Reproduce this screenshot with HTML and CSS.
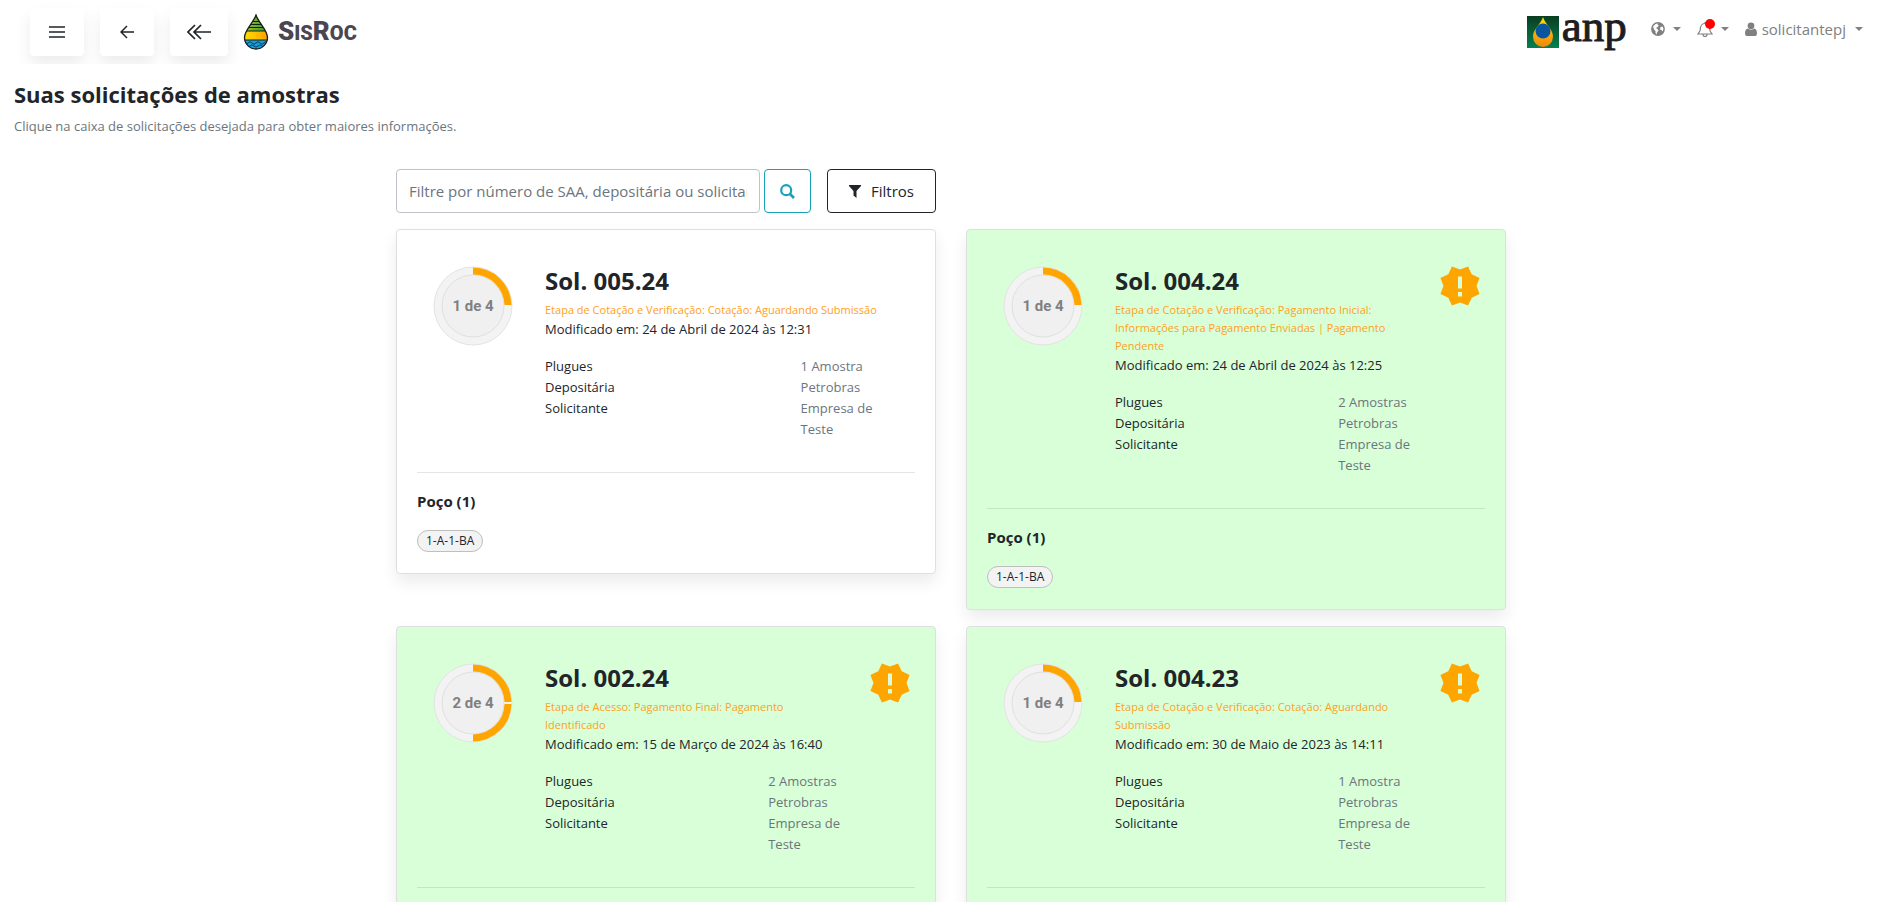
FILE: index.html
```html
<!DOCTYPE html>
<html lang="pt-BR">
<head>
<meta charset="utf-8">
<title>SisRoc - Solicitações de amostras</title>
<link rel="stylesheet" href="styles.css">
</head>
<body>
<svg class="defs" aria-hidden="true">
  <symbol id="badge" viewBox="-20 -20 40 40">
    <path fill="#ffa500" d="M0-16.5 8.1-19.6 11.7-11.7 19.6-8.1 16.5 0 19.6 8.1 11.7 11.7 8.1 19.6 0 16.5-8.1 19.6-11.7 11.7-19.6 8.1-16.5 0-19.6-8.1-11.7-11.7-8.1-19.6z"/>
    <path fill="#d8ffd8" d="M-2-9.5h4v12h-4zM-2 6h4v4.500h-4z"/>
  </symbol>
  <symbol id="ring" viewBox="0 0 80 80">
    <circle cx="40" cy="40" r="39" fill="#f3f3f3" stroke="#e3e3e3"/>
    <circle cx="40" cy="40" r="31" fill="#f0f0f0" stroke="#e0e0e0"/>
    <path d="M40 5A35 35 0 0 1 75 39" fill="none" stroke="#ffa500" stroke-width="7"/>
  </symbol>
</svg>
<header class="topbar">
  <button class="nav-btn" aria-label="Menu">
    <svg width="16" height="12" viewBox="0 0 16 12"><path d="M0 1h16M0 6h16M0 11h16" stroke="#212529" stroke-width="1.500"/></svg>
  </button>
  <button class="nav-btn" aria-label="Voltar">
    <svg width="14" height="14" viewBox="0 0 14 14"><path d="M14 7H1M7 1 1 7l6 6" fill="none" stroke="#212529" stroke-width="1.500"/></svg>
  </button>
  <button class="nav-btn nav-btn-wide" aria-label="Voltar ao início">
    <svg width="24" height="16" viewBox="0 0 24 16"><path d="M24 8H8M8 1 1 8l7 7M14 1 7 8l7 7" fill="none" stroke="#212529" stroke-width="1.700"/></svg>
  </button>
  <a class="brand" href="#">
    <svg width="26" height="36" viewBox="0 0 26 36">
      <defs>
        <linearGradient id="g1" x2="1"><stop stop-color="#a5c71f"/><stop offset="1" stop-color="#2f8f3c"/></linearGradient>
        <linearGradient id="g2" x2="1"><stop stop-color="#ffe000"/><stop offset="1" stop-color="#ff9d00"/></linearGradient>
        <clipPath id="drop"><path d="M13 1C11 8 1.500 16 1.500 23.500a11.500 11.500 0 0 0 23 0C24.500 16 15 8 13 1z"/></clipPath>
      </defs>
      <g clip-path="url(#drop)">
        <path fill="url(#g1)" d="M0 0h26v17H0z"/>
        <path fill="url(#g2)" d="M0 17h26v9H0z"/>
        <path fill="#159fd8" d="M0 26h26v10H0z"/>
        <path d="M0 7.500h26M0 10.500h26M0 13.500h26M0 17h26M0 26h26" stroke="#16240f"/>
        <path d="M1 29q2 2.500 4 0t4 0 4 0 4 0 4 0 4 0M3 32q2 2 4 0t4 0 4 0 4 0 4 0" fill="none" stroke="#0b3c66"/>
      </g>
      <path d="M13 1C11 8 1.500 16 1.500 23.500a11.500 11.500 0 0 0 23 0C24.500 16 15 8 13 1z" fill="none" stroke="#1d1d1b" stroke-width="1.300"/>
    </svg>
    <span class="brand-name">S<small>IS</small>R<small>OC</small></span>
  </a>
  <nav class="user-nav">
    <a class="anp" href="#">
      <svg width="32" height="32" viewBox="0 0 32 32">
        <defs>
          <linearGradient id="g3" x2="0" y2="1"><stop stop-color="#0a3d22"/><stop offset="1" stop-color="#058050"/></linearGradient>
          <linearGradient id="g4" x2="0" y2="1"><stop stop-color="#ffe000"/><stop offset="1" stop-color="#f0860f"/></linearGradient>
        </defs>
        <path fill="url(#g3)" d="M0 0h32v32H0z"/>
        <path fill="url(#g4)" d="M16 1C14 8 6 13 6 20.500a10 10.500 0 0 0 20 0C26 13 18 8 16 1z"/>
        <circle cx="16" cy="15" r="7.500" fill="#0b55a0"/>
      </svg>
      <span class="anp-name">anp</span>
    </a>
    <button class="nav-item" aria-label="Idioma">
      <svg width="14" height="14" viewBox="0 0 14 14"><circle cx="7" cy="7" r="6.900" fill="#808080"/><path fill="#fff" d="M2 4.500 4.500 2 7 1.500 6.500 3 8 3.500 6.500 5 5 6 6.500 7 7.500 8.500 6 10.500 5.500 12.500 4.500 11 4.500 9 3 7.500zM9.500 5 11.500 4.500 12.500 7 11.500 9.500 10.500 8 9 7.500z"/></svg>
      <span class="caret"></span>
    </button>
    <button class="nav-item" aria-label="Notificações">
      <span class="bell">
        <svg width="16" height="16" viewBox="0 0 16 16"><path d="M8 1v1.500M1 13C3 11 3.500 9 3.500 7a4.500 4.500 0 0 1 9 0c0 2 .5 4 2.500 6zM6 13.500a2 2 0 0 0 4 0" fill="none" stroke="#808080" stroke-width="1.200"/></svg>
        <span class="dot"></span>
      </span>
      <span class="caret"></span>
    </button>
    <button class="nav-item user">
      <svg width="12" height="14" viewBox="0 0 12 14"><circle cx="6" cy="3.800" r="3.400" fill="#808080"/><path fill="#808080" d="M3 6.500Q6 9 9 6.500q3 .5 3 5Q12 14 10 14H2q-2 0-2-2.500 0-4.500 3-5z"/></svg>
      <span class="user-name">solicitantepj</span>
      <span class="caret"></span>
    </button>
  </nav>
</header>

<main class="page">
  <h1 class="page-title">Suas solicitações de amostras</h1>
  <p class="page-sub">Clique na caixa de solicitações desejada para obter maiores informações.</p>

  <div class="container">
    <form class="filters">
      <input class="search" type="text" aria-label="Filtro" placeholder="Filtre por número de SAA, depositária ou solicitante">
      <button class="btn btn-search" type="button" aria-label="Buscar">
        <svg width="15" height="15" viewBox="0 0 15 15"><circle cx="6.200" cy="6.200" r="5" fill="none" stroke="#17a2b8" stroke-width="2.200"/><path d="m10 10 4 4" stroke="#17a2b8" stroke-width="2.600"/></svg>
      </button>
      <button class="btn btn-filter" type="button">
        <svg width="12" height="13" viewBox="0 0 12 13"><path fill="#212529" d="M0 0h12v1L7.500 6v7L4.500 10.500V6L0 1z"/></svg>
        Filtros
      </button>
    </form>

    <div class="cards">
      <article class="card">
        <div class="summary">
          <div class="progress"><svg class="ring"><use href="#ring"/></svg><span class="step">1 de 4</span></div>
          <div class="info">
            <h2 class="title">Sol. 005.24</h2>
            <p class="status">Etapa de Cotação e Verificação: Cotação: Aguardando Submissão</p>
            <p class="modified">Modificado em: 24 de Abril de 2024 às 12:31</p>
            <dl class="details">
              <dt>Plugues</dt><dd>1 Amostra</dd>
              <dt>Depositária</dt><dd>Petrobras</dd>
              <dt>Solicitante</dt><dd>Empresa de Teste</dd>
            </dl>
          </div>
        </div>
        <div class="wells">
          <h3 class="wells-title">Poço (1)</h3>
          <span class="pill">1-A-1-BA</span>
        </div>
      </article>

      <article class="card pending">
        <div class="summary">
          <div class="progress"><svg class="ring"><use href="#ring"/></svg><span class="step">1 de 4</span></div>
          <div class="info">
            <h2 class="title">Sol. 004.24</h2>
            <p class="status">Etapa de Cotação e Verificação: Pagamento Inicial: Informações para Pagamento Enviadas | Pagamento Pendente</p>
            <p class="modified">Modificado em: 24 de Abril de 2024 às 12:25</p>
            <dl class="details">
              <dt>Plugues</dt><dd>2 Amostras</dd>
              <dt>Depositária</dt><dd>Petrobras</dd>
              <dt>Solicitante</dt><dd>Empresa de Teste</dd>
            </dl>
          </div>
          <svg class="alert"><use href="#badge"/></svg>
        </div>
        <div class="wells">
          <h3 class="wells-title">Poço (1)</h3>
          <span class="pill">1-A-1-BA</span>
        </div>
      </article>

      <article class="card pending">
        <div class="summary">
          <div class="progress"><svg class="ring" viewBox="0 0 80 80"><use href="#ring"/><path d="M75 41A35 35 0 0 1 40 75" fill="none" stroke="#ffa500" stroke-width="7"/></svg><span class="step">2 de 4</span></div>
          <div class="info">
            <h2 class="title">Sol. 002.24</h2>
            <p class="status">Etapa de Acesso: Pagamento Final: Pagamento Identificado</p>
            <p class="modified">Modificado em: 15 de Março de 2024 às 16:40</p>
            <dl class="details">
              <dt>Plugues</dt><dd>2 Amostras</dd>
              <dt>Depositária</dt><dd>Petrobras</dd>
              <dt>Solicitante</dt><dd>Empresa de Teste</dd>
            </dl>
          </div>
          <svg class="alert"><use href="#badge"/></svg>
        </div>
        <div class="wells"></div>
      </article>

      <article class="card pending">
        <div class="summary">
          <div class="progress"><svg class="ring"><use href="#ring"/></svg><span class="step">1 de 4</span></div>
          <div class="info">
            <h2 class="title">Sol. 004.23</h2>
            <p class="status">Etapa de Cotação e Verificação: Cotação: Aguardando Submissão</p>
            <p class="modified">Modificado em: 30 de Maio de 2023 às 14:11</p>
            <dl class="details">
              <dt>Plugues</dt><dd>1 Amostra</dd>
              <dt>Depositária</dt><dd>Petrobras</dd>
              <dt>Solicitante</dt><dd>Empresa de Teste</dd>
            </dl>
          </div>
          <svg class="alert"><use href="#badge"/></svg>
        </div>
        <div class="wells"></div>
      </article>
    </div>
  </div>
</main>
</body>
</html>
```

FILE: styles.css
```css
* { box-sizing: border-box; }
html { scrollbar-width: none; }
body {
  margin: 0;
  background: #fff;
  color: #212529;
  font-family: "Open Sans", "Noto Sans", sans-serif;
  font-size: 13px;
  line-height: 21px;
}
h1, h2, h3, p, dl, dd { margin: 0; }
button, input { font: inherit; color: inherit; }
button { cursor: pointer; }
a { text-decoration: none; }
.defs { position: absolute; width: 0; height: 0; }

.topbar {
  display: flex;
  align-items: center;
  gap: 16px;
  height: 64px;
  padding: 0 37px 0 30px;
  overflow: hidden;
}
.nav-btn {
  display: flex;
  align-items: center;
  justify-content: center;
  width: 54px;
  height: 48px;
  padding: 0;
  border: 0;
  border-radius: 4px;
  background: #fff;
  box-shadow: 0 8px 16px rgba(0, 0, 0, .08);
}
.nav-btn-wide { width: 58px; }
.brand { display: flex; align-items: center; gap: 9px; margin-left: -1px; }
.brand-name {
  color: #4b4650;
  font-family: Impact, Roboto, sans-serif;
  font-size: 26px;
  font-weight: 900;
  line-height: 36px;
}
.brand-name small { font-size: 20px; }

.user-nav {
  display: flex;
  align-items: center;
  align-self: flex-start;
  height: 58px;
  margin-left: auto;
}
.anp {
  display: flex;
  align-items: center;
  align-self: flex-end;
  gap: 3px;
  height: 52px;
  margin-right: 24px;
}
.anp-name {
  height: 52px;
  color: #1d1d24;
  font-family: "Liberation Serif", serif;
  font-size: 45px;
  line-height: 40px;
  -webkit-text-stroke: 1px #1d1d24;
}
.nav-item {
  display: flex;
  align-items: center;
  gap: 8px;
  margin-right: 16px;
  padding: 0;
  border: 0;
  background: none;
  color: #808080;
  font-size: 15px;
}
.nav-item.user { gap: 5px; margin-right: 0; }
.user .caret { margin-left: 4px; }
.caret { border: 4px solid transparent; border-top-color: #808080; border-bottom: 0; }
.bell { position: relative; display: flex; }
.dot {
  position: absolute;
  top: -2px;
  right: -2px;
  width: 10px;
  height: 10px;
  border-radius: 50%;
  background: #f00;
}

.page { padding: 16px 12px 32px 14px; }
.page-title { font-size: 22px; font-weight: 700; line-height: 28px; }
.page-sub { margin-top: 8px; color: #6c757d; }
.container { max-width: 1110px; margin: 32px auto 0; }

.filters { display: flex; width: calc(50% - 15px); }
.search {
  flex: 1;
  min-width: 0;
  height: 44px;
  padding: 0 12px;
  border: 1px solid #bfc3c7;
  border-radius: 4px;
  font-size: 15px;
}
.search::placeholder { color: #6c757d; opacity: 1; }
.btn {
  display: flex;
  align-items: center;
  justify-content: center;
  height: 44px;
  border: 1px solid #212529;
  border-radius: 4px;
  background: #fff;
  font-size: 15px;
}
.btn-search { width: 47px; margin: 0 16px 0 4px; padding: 0; border-color: #17a2b8; }
.btn-filter { gap: 10px; width: 109px; padding: 0; }

.cards {
  display: grid;
  grid-template-columns: 1fr 1fr;
  align-items: start;
  gap: 16px 30px;
  margin-top: 16px;
}
.card {
  padding: 20px;
  border: 1px solid #dfdfdf;
  border-radius: 4px;
  background: #fff;
  box-shadow: 0 8px 16px rgba(0, 0, 0, .08);
}
.card.pending { background: #d8ffd8; }
.summary { display: flex; padding: 16px 0 32px 16px; }
.progress { display: grid; place-items: center; width: 80px; height: 80px; margin-right: 32px; }
.ring, .step { grid-area: 1 / 1; }
.ring { width: 80px; height: 80px; }
.step { color: #808080; font-family: Roboto, sans-serif; font-size: 15px; font-weight: 700; }
.info { flex: 1; min-width: 0; margin-right: 15px; }
.title { margin-bottom: 6px; font-size: 24px; font-weight: 700; line-height: 29px; }
.status { padding-right: 16px; color: #ffa01e; font-size: 11px; line-height: 18px; }
.details { display: grid; grid-template-columns: 72fr 28fr; margin-top: 16px; }
.details dd { color: #6c757d; }
.alert { flex: none; width: 40px; height: 40px; margin-right: 5px; }
.wells { min-height: 81px; padding-top: 16px; border-top: 1px solid rgba(0, 0, 0, .1); }
.wells-title { font-size: 15px; font-weight: 700; line-height: 24px; }
.pill {
  display: block;
  width: fit-content;
  margin-top: 17px;
  padding: 0 8px;
  border: 1px solid #bfbfbf;
  border-radius: 11px;
  background: #f3f3f3;
  font-size: 12px;
  line-height: 20px;
}
```
